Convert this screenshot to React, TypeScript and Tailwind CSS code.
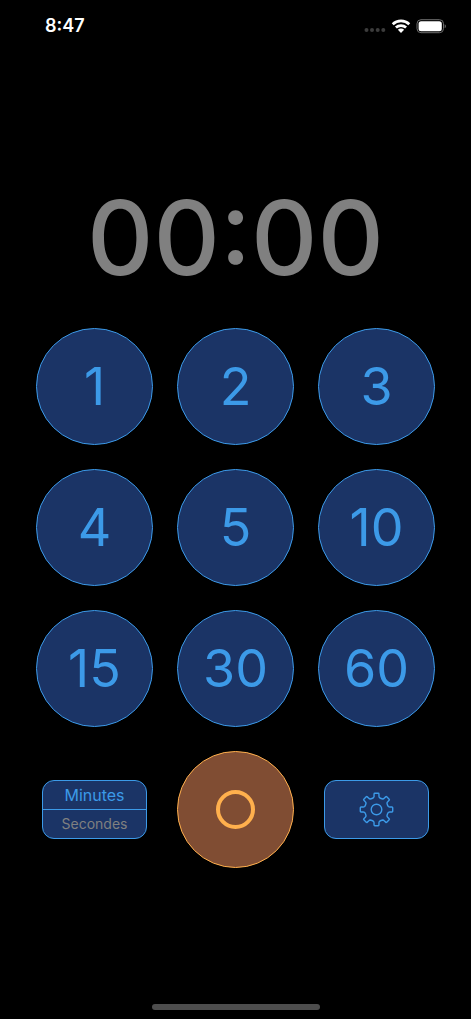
import { useState } from "react"

type Unit = "minutes" | "secondes"

const DURATIONS = [1, 2, 3, 4, 5, 10, 15, 30, 60]

const UNITS: { value: Unit; label: string }[] = [
  { value: "minutes", label: "Minutes" },
  { value: "secondes", label: "Secondes" },
]

// Outline of an eight-tooth cog centred on 0,0
function gearPath() {
  const at = (radius: number, deg: number) => {
    const a = (deg * Math.PI) / 180
    return `${(radius * Math.cos(a)).toFixed(2)} ${(radius * Math.sin(a)).toFixed(2)}`
  }
  let d = `M${at(12.2, -14)}`
  for (let t = 0; t < 360; t += 45) {
    d += `Q${at(12.8, t - 11)} ${at(13.6, t - 10.5)}`
    d += `L${at(15.6, t - 9)}Q${at(16.4, t - 8.5)} ${at(16.3, t - 6)}`
    d += `L${at(16.3, t + 6)}Q${at(16.4, t + 8.5)} ${at(15.6, t + 9)}`
    d += `L${at(13.6, t + 10.5)}Q${at(12.8, t + 11)} ${at(12.2, t + 14)}`
    d += `Q${at(11.6, t + 22.5)} ${at(12.2, t + 31)}`
  }
  return d + "Z"
}

function StatusBar() {
  return (
    <header className="flex h-[52px] items-center justify-between pl-[45px] pr-6 text-white">
      <span className="text-lg font-semibold">8:47</span>
      <div className="flex items-center gap-[5px]">
        <svg width="22" height="6" viewBox="0 0 22 6" className="mt-2 fill-[#3c3c3c]" aria-hidden="true">
          <circle cx="2.5" cy="3" r="2" />
          <circle cx="8" cy="3" r="2" />
          <circle cx="13.7" cy="3" r="2" />
          <circle cx="19.3" cy="3" r="2" />
        </svg>
        <svg width="20" height="15" viewBox="0 0 20 15" fill="none" stroke="currentColor" strokeWidth="2.7" aria-hidden="true">
          <path d="M1.7 5.3a12 12 0 0 1 16.6 0" />
          <path d="M4.9 8.6a7.4 7.4 0 0 1 10.2 0" />
          <path d="M10 13.9 6.9 10.8a4.4 4.4 0 0 1 6.2 0Z" fill="currentColor" stroke="none" />
        </svg>
        <svg width="31" height="15" viewBox="0 0 31 15" fill="none" aria-hidden="true">
          <rect x="1" y="0.7" width="26.500" height="13" rx="4" stroke="#6e6e6e" />
          <rect x="2.600" y="2.200" width="23.200" height="10" rx="2.5" fill="currentColor" />
          <path d="M28.7 5.2c1.6.5 1.6 3.500 0 4Z" fill="#6e6e6e" />
        </svg>
      </div>
    </header>
  )
}

export default function App() {
  const [seconds, setSeconds] = useState(0)
  const [unit, setUnit] = useState<Unit>("minutes")

  const mm = String(Math.floor(seconds / 60)).padStart(2, "0")
  const ss = String(seconds % 60).padStart(2, "0")

  return (
    <div className="flex min-h-screen flex-col bg-black font-['Inter',sans-serif]">
      <StatusBar />

      <main className="flex-1 px-9 pt-[124px]">
        <h1 className="text-center text-[103px] font-medium leading-[124px] text-[#808080]">
          {mm}:{ss}
        </h1>

        <div className="mt-7 grid grid-cols-3 items-center gap-6">
          {DURATIONS.map((n) => (
            <button
              key={n}
              onClick={() => setSeconds(unit === "minutes" ? n * 60 : n)}
              className="flex aspect-square items-center justify-center rounded-full border border-[#3c9ae8] bg-[#1b3466] text-[52px] text-[#3c9ae8]"
            >
              {n}
            </button>
          ))}

          {/* Unit switch */}
          <div className="mx-1.5 flex h-[59px] flex-col divide-y divide-[#3c9ae8] overflow-hidden rounded-xl border border-[#3c9ae8] bg-[#1b3466]">
            {UNITS.map((u) => (
              <button
                key={u.value}
                onClick={() => setUnit(u.value)}
                aria-pressed={unit === u.value}
                className={`flex-1 leading-7 ${unit === u.value ? "text-base/7 text-[#3c9ae8]" : "text-sm/7 text-[#808080]"}`}
              >
                {u.label}
              </button>
            ))}
          </div>

          <button
            onClick={() => setSeconds(0)}
            aria-label="Démarrer"
            className="flex aspect-square items-center justify-center rounded-full border border-[#ffb04d] bg-[#804d33]"
          >
            <span className="size-[39px] rounded-full border-4 border-[#ffb04d]" />
          </button>

          <button
            aria-label="Réglages"
            className="mx-1.5 flex h-[59px] items-center justify-center rounded-xl border border-[#3c9ae8] bg-[#1b3466] text-[#3c9ae8]"
          >
            <svg width="35" height="35" viewBox="-17.5 -17.5 35 35" fill="none" stroke="currentColor" strokeWidth="1.4" strokeLinejoin="round" aria-hidden="true">
              <path d={gearPath()} />
              <circle r="5.3" />
            </svg>
          </button>
        </div>
      </main>

      {/* Home indicator */}
      <div className="mx-auto mb-[9px] h-1.5 w-[168px] rounded-full bg-[#4d4d4d]" />
    </div>
  )
}
